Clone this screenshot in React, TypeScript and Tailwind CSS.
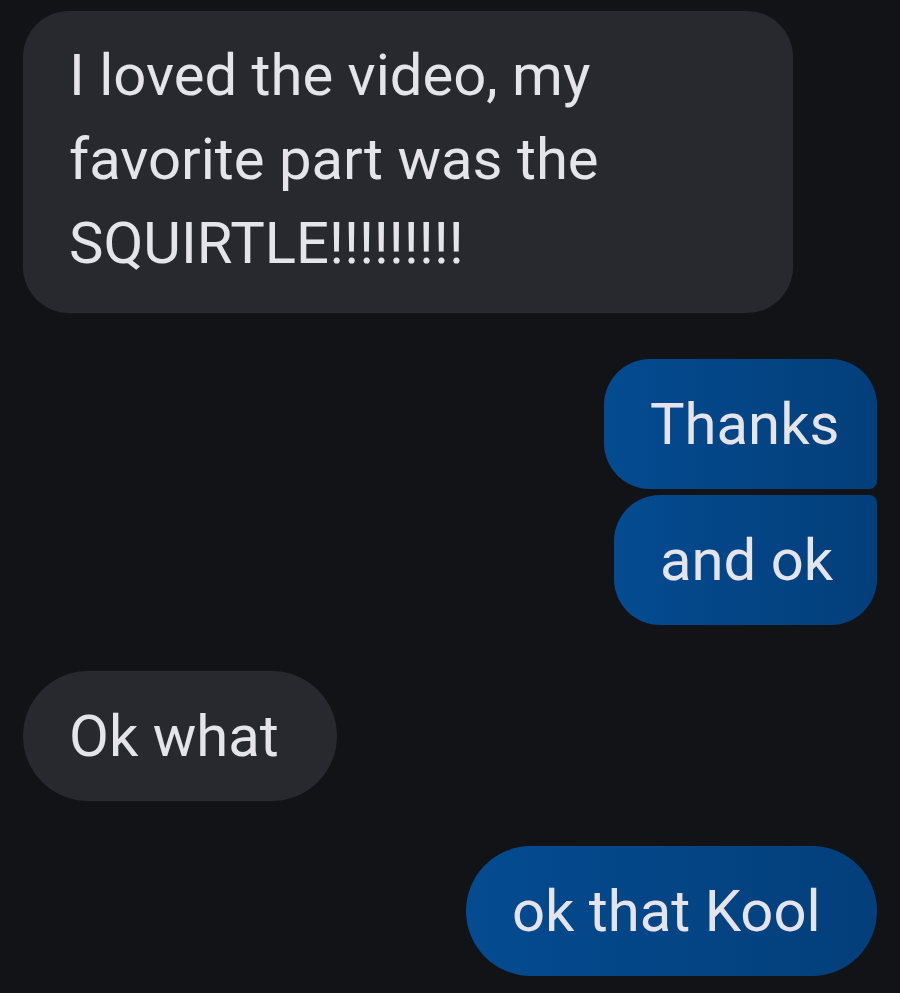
const font = { fontFamily: "Roboto, 'Noto Sans', sans-serif" };

function Incoming({ text, className = "" }: { text: string; className?: string }) {
  return (
    <div className={`self-start bg-[#28292e] text-[#e4e4ea] pl-[46px] py-[23px] text-[58px] leading-[84px] whitespace-pre-wrap ${className}`}>
      {text}
    </div>
  );
}

function Outgoing({ text, className = "" }: { text: string; className?: string }) {
  return (
    <div
      className={`self-end bg-linear-to-r from-[#044b91] to-[#033f7a] text-[#e4e4ea] pl-[46px] py-[23px] text-[58px] leading-[84px] whitespace-nowrap ${className}`}
    >
      {text}
    </div>
  );
}

export default function App() {
  return (
    <div className="w-[900px] h-[993px] bg-[#121317] overflow-hidden" style={font}>
      <div className="flex flex-col px-[23px] pt-[11px]">
        <Incoming
          text="I loved the video, my favorite part was the SQUIRTLE!!!!!!!!!"
          className="w-[770px] pr-[46px] rounded-[46px] pt-[22px] pb-[28px]"
        />
        <Outgoing text="Thanks" className="w-[273px] mt-[46px] rounded-[46px] rounded-br-[8px]" />
        <Outgoing text="and ok" className="w-[263px] mt-[6px] rounded-[46px] rounded-tr-[8px]" />
        <Incoming text="Ok what" className="w-[314px] mt-[46px] rounded-[65px]" />
        <Outgoing text="ok that Kool" className="w-[411px] mt-[45px] rounded-[65px]" />
      </div>
    </div>
  );
}
